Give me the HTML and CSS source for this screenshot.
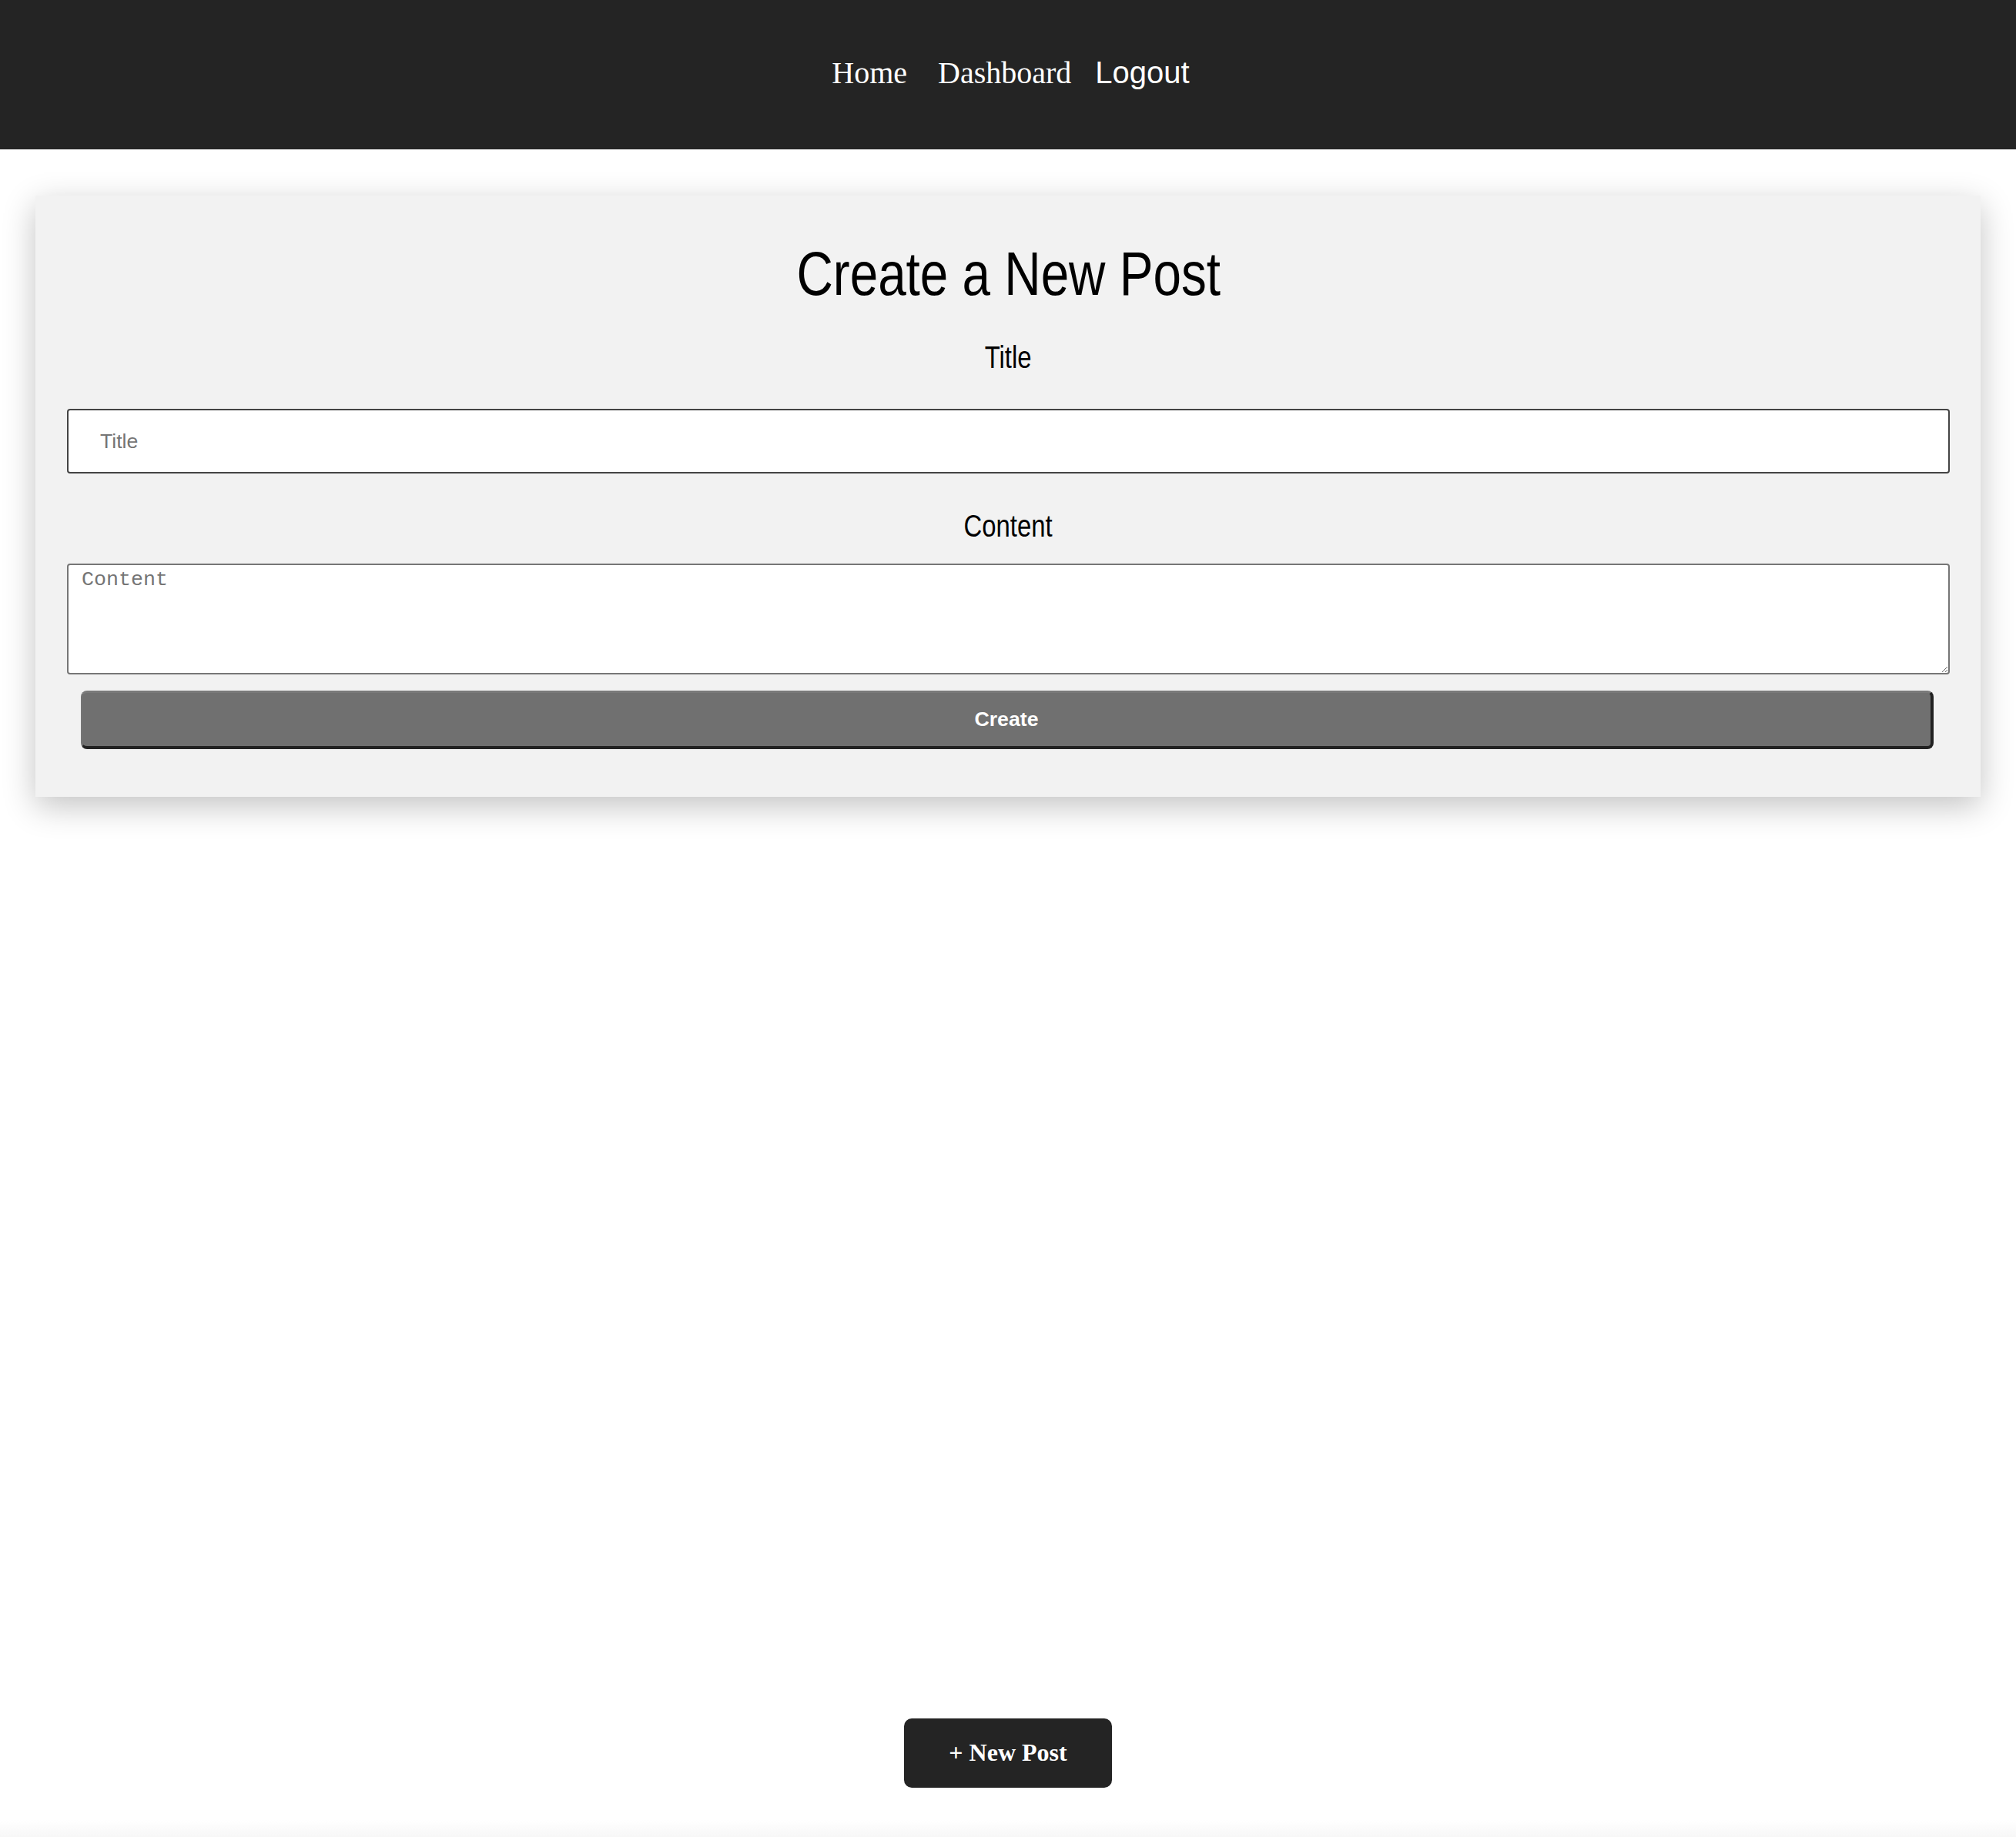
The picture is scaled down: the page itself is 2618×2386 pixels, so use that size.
FILE: index.html
```html
<!DOCTYPE html>
<html lang="en">
<head>
<meta charset="utf-8">
<title>Create a New Post</title>
<link rel="stylesheet" href="styles.css">
</head>
<body>
<div class="page">
  <header class="topbar">
    <nav class="nav">
      <a class="nav-link" href="#">Home</a>
      <a class="nav-link" href="#">Dashboard</a>
      <button class="logout" type="button">Logout</button>
    </nav>
  </header>

  <main class="main">
    <section class="card">
      <h1 class="card-title"><span class="narrow">Create a New Post</span></h1>
      <form class="post-form">
        <label class="field-label" for="title"><span class="narrow">Title</span></label>
        <input class="title-input" id="title" type="text" placeholder="Title">
        <label class="field-label field-label--content" for="content"><span class="narrow">Content</span></label>
        <textarea class="content-input" id="content" placeholder="Content"></textarea>
        <button class="create-btn" type="button">Create</button>
      </form>
    </section>
  </main>

  <div class="actions">
    <button class="new-post-btn" type="button">+ New Post</button>
  </div>
  <div class="bottom-fade"></div>
</div>
</body>
</html>
```

FILE: styles.css
```css
html, body {
  margin: 0;
  padding: 0;
  background: #ffffff;
}

body {
  font-family: "Liberation Serif", "Times New Roman", serif;
}

.page {
  min-height: 2386px;
  display: flex;
  flex-direction: column;
}

.topbar {
  height: 194px;
  box-sizing: border-box;
  padding-bottom: 6px;
  background: #242424;
  display: flex;
  align-items: center;
  justify-content: center;
}

.nav {
  display: flex;
  align-items: center;
  gap: 40px;
  padding-left: 7px;
}

.nav-link {
  color: #ffffff;
  text-decoration: none;
  font-family: "Liberation Serif", "Times New Roman", serif;
  font-size: 40px;
}

.logout {
  background: none;
  border: none;
  padding: 0;
  margin: 0 0 0 -9px;
  color: #ffffff;
  font-family: "Liberation Sans", Arial, sans-serif;
  font-size: 40px;
  cursor: pointer;
}

.main {
  padding: 60px 46px 0;
}

.card {
  background: #f2f2f2;
  box-shadow: 0 12px 40px rgba(0, 0, 0, 0.24);
  padding: 56px 40px 62px 41px;
}

.narrow {
  display: inline-block;
  transform: scaleX(0.82);
}

.card-title {
  margin: 0;
  text-align: center;
  font-family: "Liberation Sans", Arial, sans-serif;
  font-weight: normal;
  font-size: 80px;
  color: #000000;
}

.post-form {
  display: flex;
  flex-direction: column;
}

.field-label {
  display: block;
  text-align: center;
  font-family: "Liberation Sans", Arial, sans-serif;
  font-size: 40px;
  color: #000000;
  margin: 40px 0 44px;
}

.field-label--content {
  margin: 46px 0 26px;
}

.title-input {
  height: 84px;
  box-sizing: border-box;
  border: 2px solid #444444;
  border-radius: 4px;
  background: #ffffff;
  padding: 0 41px;
  font-family: "Liberation Sans", Arial, sans-serif;
  font-size: 26.67px;
  color: #000000;
}

.title-input::placeholder {
  color: #757575;
}

.content-input {
  height: 144px;
  box-sizing: border-box;
  border: 2px solid #767676;
  border-radius: 4px;
  background: #ffffff;
  padding: 4px 17px;
  font-family: "Liberation Mono", "Courier New", monospace;
  font-size: 26.67px;
  color: #000000;
  resize: both;
}

.content-input::placeholder {
  color: #757575;
}

.create-btn {
  margin: 21px 21px 0 18px;
  height: 76px;
  background: #707070;
  color: #ffffff;
  border-style: solid;
  border-width: 3px 4px 4px 2px;
  border-color: #7a7a7a #222222 #222222 #767676;
  border-radius: 8px;
  font-family: "Liberation Sans", Arial, sans-serif;
  font-weight: bold;
  font-size: 26.67px;
  cursor: pointer;
}

.actions {
  margin-top: auto;
  display: flex;
  justify-content: center;
  padding-bottom: 42px;
}

.new-post-btn {
  width: 270px;
  height: 90px;
  padding: 0 0 2px;
  background: #242424;
  color: #ffffff;
  border: none;
  border-radius: 10px;
  font-family: "Liberation Serif", "Times New Roman", serif;
  font-weight: bold;
  font-size: 32px;
  cursor: pointer;
}

.bottom-fade {
  height: 22px;
  background: linear-gradient(#ffffff, #f7f7f7);
}
```
